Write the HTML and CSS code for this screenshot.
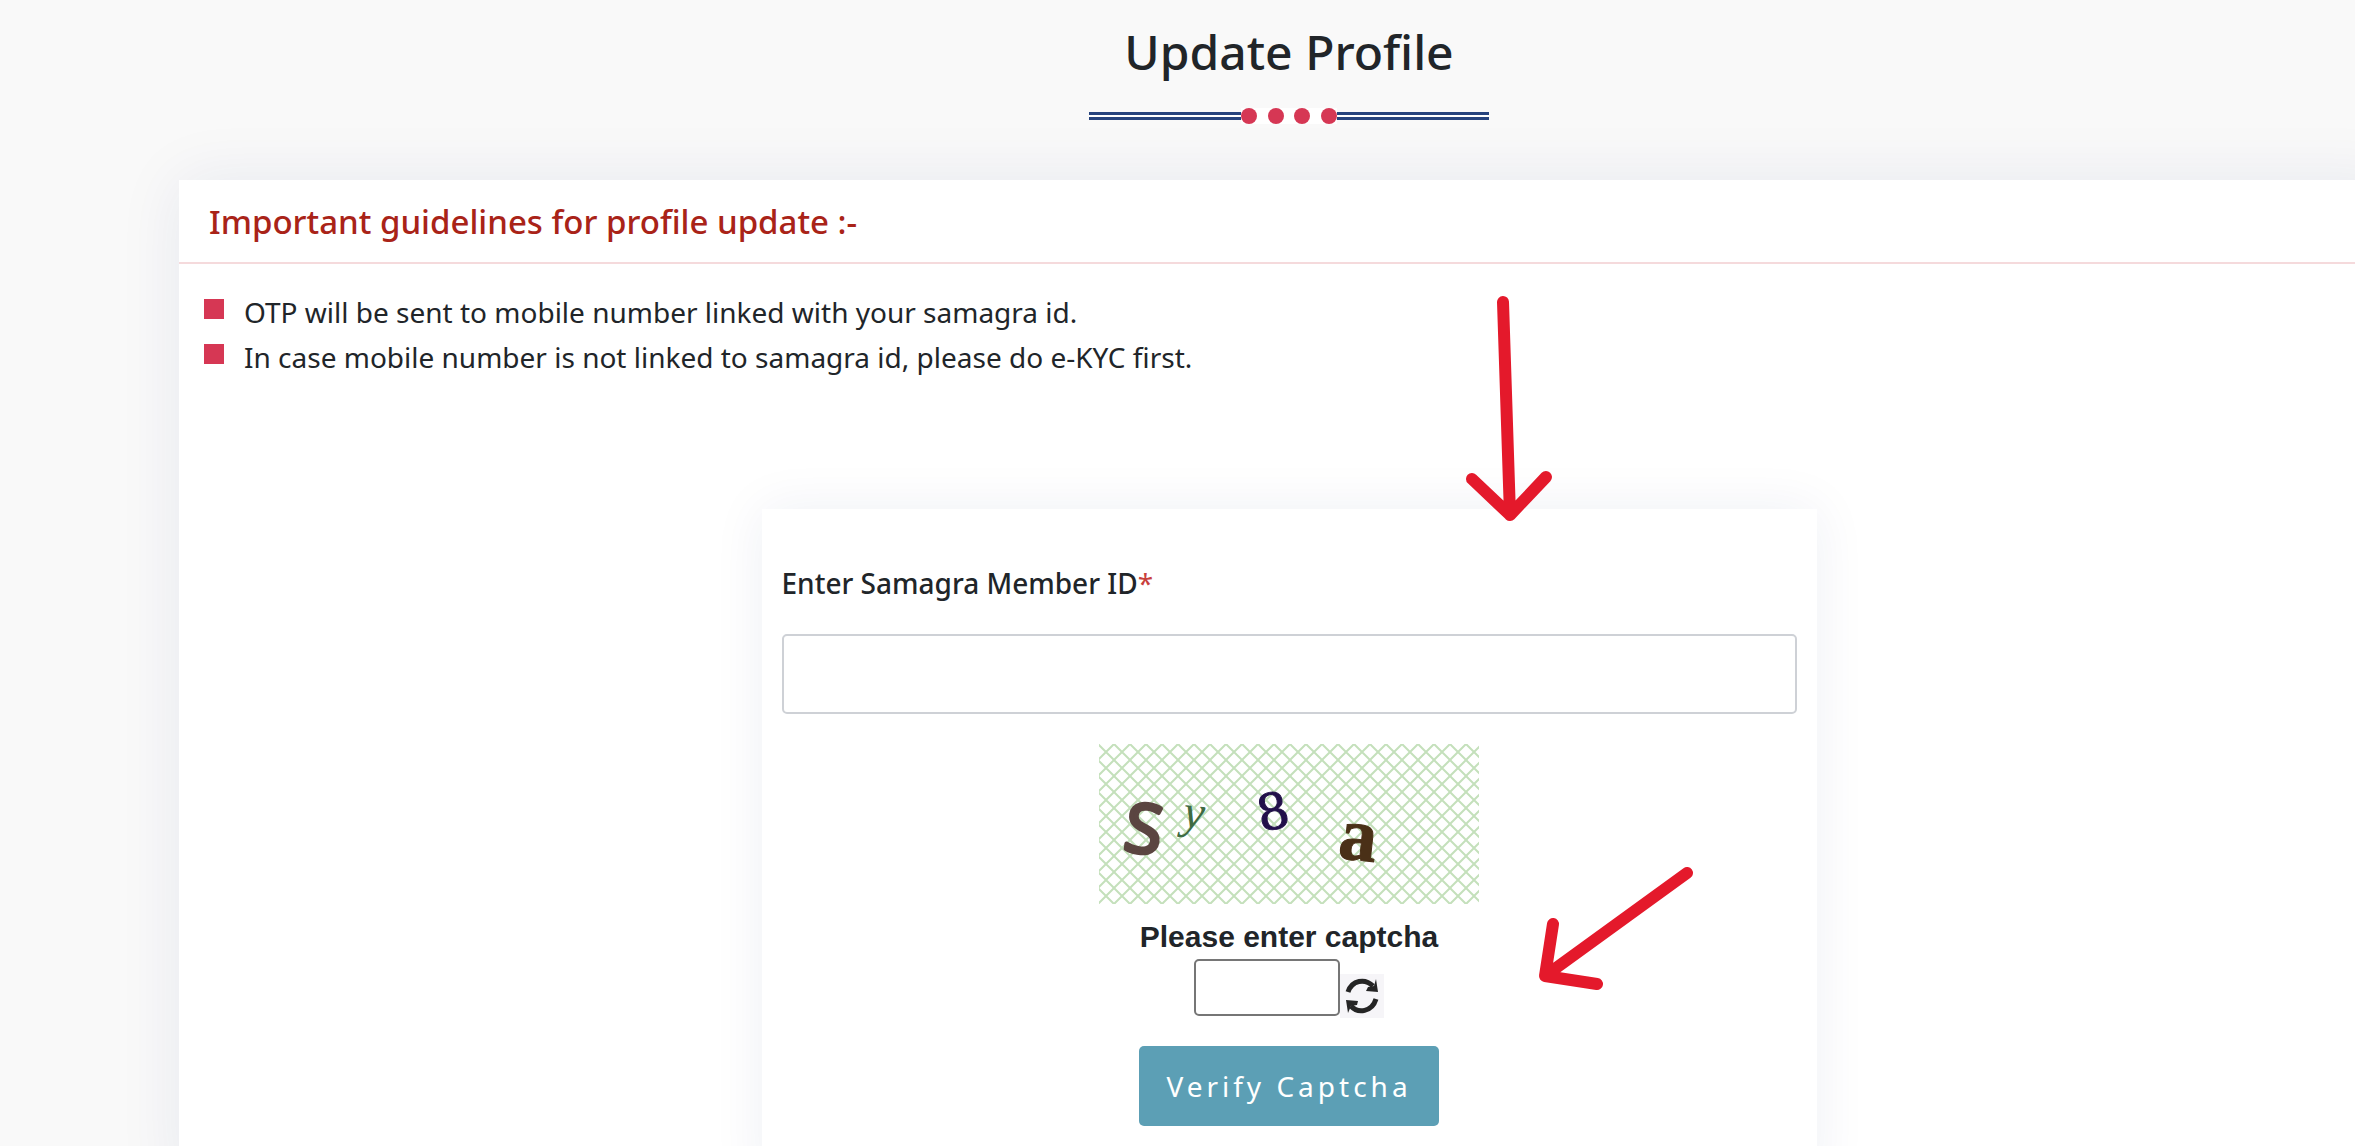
FILE: index.html
```html
<!DOCTYPE html>
<html lang="en">

<head>
    <meta charset="UTF-8">
    <meta name="viewport" content="width=device-width, initial-scale=1.0">
    <title>Update Profile</title>
    <link rel="stylesheet" href="styles.css">
</head>

<body>
    <main class="container">
        <div class="section-title">
            <h1>Update Profile</h1>
            <div class="divider">
                <div class="dots"><span></span><span></span><span></span><span></span></div>
            </div>
        </div>

        <div class="profile-card">
            <h2>Important guidelines for profile update :-</h2>
            <ul class="guidelines">
                <li>OTP will be sent to mobile number linked with your samagra id.</li>
                <li>In case mobile number is not linked to samagra id, please do e-KYC first.</li>
            </ul>

            <form class="member-form">
                <label for="member-id" class="member-label">Enter Samagra Member ID<span>*</span></label>
                <input type="text" id="member-id" class="member-input">

                <div class="captcha">
                    <svg class="captcha-image" viewBox="0 0 380 160" role="img" aria-label="captcha">
                        <defs>
                            <pattern id="hatch" x="-1" width="16" height="16" patternUnits="userSpaceOnUse">
                                <path d="M-1 -1L17 17M17 -1L-1 17" stroke="#c4e0bb" stroke-width="2" />
                            </pattern>
                        </defs>
                        <rect width="380" height="160" fill="url(#hatch)" />
                        <text class="c1" transform="translate(23 106) rotate(8)">S</text>
                        <text class="c2" transform="translate(83 83) rotate(6)">y</text>
                        <text class="c3" transform="translate(162 88) rotate(-12)">8</text>
                        <text class="c4" transform="translate(238 114) rotate(6)">a</text>
                    </svg>
                    <label for="captcha" class="captcha-label">Please enter captcha</label>
                    <div class="captcha-row">
                        <input type="text" id="captcha" class="captcha-input">
                        <button type="button" class="refresh-btn" aria-label="Refresh captcha">
                            <svg viewBox="0 0 44 44" fill="none" stroke="#252525" stroke-width="5">
                                <path d="M8 18C12 6 25 4 33 12" />
                                <path d="M36 5L38 18L26 17L28 13L34 12Z" fill="#252525" stroke="none" />
                                <path d="M36 25C32 38 18 40 11 32" />
                                <path d="M8 39L6 26L18 27L17 31L11 32Z" fill="#252525" stroke="none" />
                            </svg>
                        </button>
                    </div>
                    <button type="submit" class="verify-btn">Verify Captcha</button>
                </div>

                <svg class="arrow arrow-down" viewBox="0 0 90 228">
                    <path d="M39 8L46 221M8 185L46 221L82 183" />
                </svg>
                <svg class="arrow arrow-left" viewBox="0 0 160 130">
                    <path d="M151 9L9 112M17 60L9 112L61 120" />
                </svg>
            </form>
        </div>
    </main>
</body>

</html>
```

FILE: styles.css
```css
* {
    box-sizing: border-box;
}

body {
    margin: 0;
    background-color: #f9f9f9;
    color: #212529;
    font-family: "Segoe UI", "Noto Sans", sans-serif;
    overflow: hidden;
}

/* runs a little past the right edge of the window */
.container {
    margin-left: 179px;
    margin-right: -44px;
}

.section-title {
    padding: 17px 0 56px;
}

h1 {
    margin: 0 0 21px;
    font-size: 48px;
    font-weight: 500;
    line-height: 70px;
    text-align: center;
}

.divider {
    display: flex;
    align-items: center;
    justify-content: center;
    width: 400px;
    height: 16px;
    margin: 0 auto;
    background: linear-gradient(#26437d 3px, #fff 3px, #fff 5px, #26437d 5px) center / 100% 8px no-repeat;
}

.dots {
    display: flex;
    justify-content: space-between;
    width: 96px;
    background-color: #fff;
}

.dots span {
    width: 16px;
    height: 16px;
    border-radius: 50%;
    background-color: #d63754;
}

.profile-card {
    background-color: #fff;
    box-shadow: 0 0 60px rgba(1, 41, 112, 0.08);
}

h2 {
    margin: 0;
    padding: 17px 30px 15px;
    border-bottom: 2px solid #f5dadc;
    color: #a92318;
    font-size: 33px;
    font-weight: 500;
    line-height: 50px;
}

.guidelines {
    margin: 0;
    padding: 26px 25px 129px;
    list-style: none;
}

.guidelines li {
    display: flex;
    gap: 20px;
    font-size: 28px;
    line-height: 45px;
}

.guidelines li::before {
    content: "";
    width: 20px;
    height: 20px;
    margin-top: 9px;
    background-color: #d63754;
}

.member-form {
    position: relative;
    width: 1055px;
    margin: 0 auto;
    padding: 52px 20px 60px;
    background-color: #fff;
    box-shadow: 0 0 50px rgba(1, 41, 112, 0.07);
}

.member-label {
    display: block;
    margin-bottom: 28px;
    font-size: 28px;
    font-weight: 500;
    line-height: 45px;
}

.member-label span {
    color: #c8403c;
    font-weight: 400;
}

.member-input {
    display: block;
    width: 100%;
    height: 80px;
    padding: 10px 20px;
    border: 2px solid #ced1d6;
    border-radius: 5px;
    font-size: 28px;
}

.captcha {
    display: flex;
    flex-direction: column;
    align-items: center;
    margin-top: 30px;
}

.captcha-image {
    width: 380px;
    height: 160px;
}

.captcha-image .c1 {
    fill: #5b4541;
    stroke: #5b4541;
    stroke-width: 4;
    stroke-linejoin: round;
    font: 68px "Open Sans", sans-serif;
}

.captcha-image .c2 {
    fill: #3f6b42;
    font: italic 48px "Liberation Serif", serif;
}

.captcha-image .c3 {
    fill: #22104a;
    stroke: #22104a;
    font: 50px "DejaVu Serif", serif;
}

.captcha-image .c4 {
    fill: #4a3017;
    stroke: #4a3017;
    font: bold 76px "Liberation Serif", serif;
}

.captcha-label {
    margin-top: 10px;
    font: bold 30px/45px "Liberation Sans", Arial, sans-serif;
}

.captcha-row {
    display: flex;
    align-items: flex-end;
    margin-bottom: 28px;
}

.captcha-input {
    width: 146px;
    height: 57px;
    margin-bottom: 2px;
    padding: 2px 6px;
    border: 2px solid #767676;
    border-radius: 5px;
    font-size: 28px;
}

.refresh-btn {
    width: 44px;
    height: 44px;
    padding: 0;
    border: 0;
    background-color: #f6f5f8;
}

.refresh-btn svg {
    display: block;
}

.verify-btn {
    width: 300px;
    height: 80px;
    padding: 0;
    border: 0;
    border-radius: 5px;
    background-color: #5c9fb5;
    color: #fff;
    font-family: inherit;
    font-size: 28px;
    letter-spacing: 4px;
}

/* hand drawn pointers over the form */
.arrow {
    position: absolute;
    fill: none;
    stroke: #e4192b;
    stroke-width: 12;
    stroke-linecap: round;
    stroke-linejoin: round;
}

.arrow-down {
    left: 702px;
    top: -215px;
    width: 90px;
}

.arrow-left {
    left: 774px;
    top: 355px;
    width: 160px;
}
```
